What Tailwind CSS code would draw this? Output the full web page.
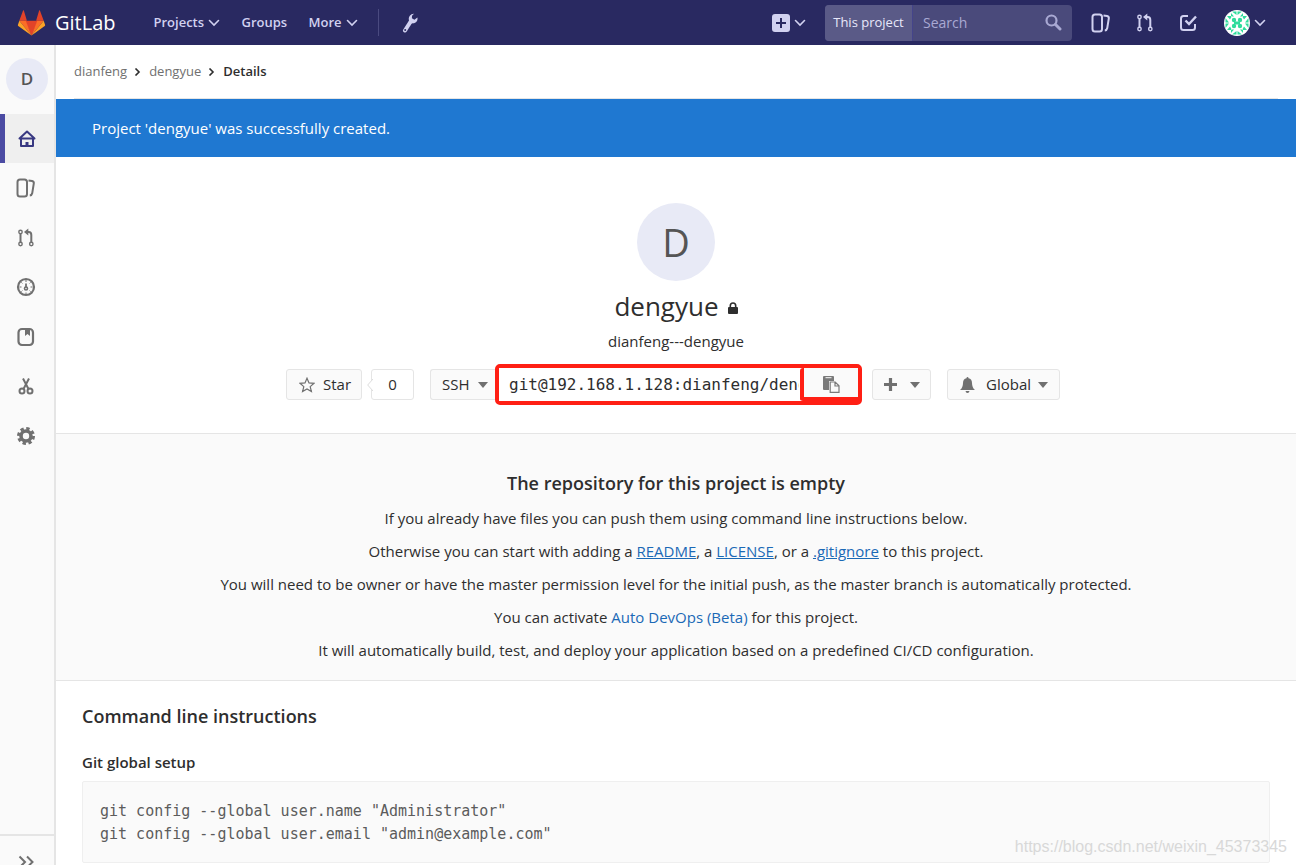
<!DOCTYPE html>
<html lang="en">
<head>
<meta charset="utf-8">
<meta name="viewport" content="width=device-width, initial-scale=1">
<title>dengyue · GitLab</title>
<script src="https://cdn.jsdelivr.net/npm/@tailwindcss/browser@4"></script>
</head>
<body class="relative flex min-h-screen flex-col bg-white font-['Open_Sans','Noto_Sans',sans-serif] text-[15px] text-[#2e2e2e]">

<svg class="hidden">
  <symbol id="chevron" viewBox="0 0 12 8"><path d="M1.500 1.500 6 6l4.500-4.500" fill="none" stroke="currentColor" stroke-width="1.600" stroke-linecap="round"/></symbol>
  <symbol id="caret" viewBox="0 0 10 6"><path d="M0 0h10L5 6z" fill="currentColor"/></symbol>
  <symbol id="issues" viewBox="0 0 20 20"><g fill="none" stroke="currentColor" stroke-width="2"><rect x="1.500" y="1.500" width="9.500" height="17" rx="2.500"/><path d="M12.500 2.500l3.600.4q2 .4 1.700 2.400l-1.600 10q-.4 2-2.400 2.200"/></g></symbol>
  <symbol id="merge" viewBox="0 0 20 20"><g fill="none" stroke="currentColor" stroke-width="1.400"><circle cx="4.500" cy="4" r="1.700"/><circle cx="4.500" cy="16" r="1.700"/><circle cx="15.300" cy="16" r="1.700"/><path d="M4.500 6v8M15.300 14V7q0-3-2.500-3H11" stroke-width="2"/></g><path d="M12.300.5v7L8 4z" fill="currentColor"/></symbol>
</svg>

<header class="flex h-[45px] items-center bg-[#292961] pr-[30px] pl-[17px] text-[#d1d1f0]">
  <a href="#" class="flex items-center gap-[9px]">
    <svg class="h-[26px] w-[29px]" viewBox="0 0 36 34">
      <path fill="#e24329" d="M2 14l5-13.200q.5-.8 1 0L12 14zM34 14 29 .8q-.5-.8-1 0L24 14z"/>
      <path fill="#e24329" d="M18 33.500 9.400 14h17.200z"/>
      <path fill="#fc6d26" d="M18 33.500 10.500 14H2z"/><path fill="#fc6d26" d="M18 33.500 25.500 14H34z"/>
      <path fill="#fca326" d="M2 14 .2 19.500a1.400 1.400 0 0 0 .5 1.400L18 33.500z"/><path fill="#fca326" d="M34 14l1.800 5.500a1.400 1.400 0 0 1-.5 1.400L18 33.500z"/>
    </svg>
    <span class="text-[20px] text-white">GitLab</span>
  </a>
  <nav class="ml-[38px] flex items-center text-[13px] font-semibold">
    <button class="flex w-[88px] items-center gap-1">Projects <svg class="h-2 w-3"><use href="#chevron"/></svg></button>
    <a href="#" class="w-[67px]">Groups</a>
    <button class="flex w-[69px] items-center gap-1">More <svg class="h-2 w-3"><use href="#chevron"/></svg></button>
    <span class="h-[27px] w-px bg-[#4a4a80]"></span>
    <a href="#" aria-label="Admin area" class="ml-[23px]"><svg class="h-5 w-4" viewBox="0 0 16 20"><path d="M3 17.500 9 8" stroke="currentColor" stroke-width="4" stroke-linecap="round"/><path d="M12 .8a5 5 0 0 0-5 6.500l1 3.200 4-.3a5 5 0 0 0 3.400-5.700l-3 2.300-2.500-1.500.1-2.600z" fill="currentColor"/><circle cx="3.200" cy="17" r="1" fill="#292961"/></svg></a>
  </nav>
  <div class="ml-auto flex items-center">
    <button aria-label="New" class="mr-[19px] flex items-center gap-1"><svg class="h-[18px] w-[18px]" viewBox="0 0 18 18"><rect width="18" height="18" rx="3" fill="currentColor"/><path d="M9 4v10M4 9h10" stroke="#292961" stroke-width="2"/></svg><svg class="h-2 w-3"><use href="#chevron"/></svg></button>
    <form class="mr-[19px] flex h-9 w-[247px] items-center overflow-hidden rounded bg-[#4a4a7b]">
      <span class="flex h-full w-[88px] shrink-0 items-center justify-center border-r border-[#44448a] bg-[#5a5a87] text-[13px] whitespace-nowrap text-[#e8e8fa]">This project</span>
      <input type="text" aria-label="Search" placeholder="Search" class="min-w-0 flex-1 bg-transparent pl-[10px] text-[14px] outline-none placeholder:text-[#a9a9d3]">
      <svg class="mr-[10px] h-[17px] w-[17px] text-[#a9a9d3]" viewBox="0 0 17 17"><circle cx="6.500" cy="6.500" r="5" fill="none" stroke="currentColor" stroke-width="2.200"/><path d="M10.500 10.500 15 15" stroke="currentColor" stroke-width="3" stroke-linecap="round"/></svg>
    </form>
    <div class="mr-[25px] flex gap-[24px]">
      <a href="#" aria-label="Issues"><svg class="h-5 w-5"><use href="#issues"/></svg></a>
      <a href="#" aria-label="Merge requests"><svg class="h-5 w-5"><use href="#merge"/></svg></a>
      <a href="#" aria-label="Todos"><svg class="h-5 w-5" viewBox="0 0 20 20"><g fill="none" stroke="currentColor"><path d="M9 3H4.500Q2 3 2 5.500v9Q2 17 4.500 17h9q2.500 0 2.500-2.500V11" stroke-width="2"/><path d="M6.500 7.500 10 11l7-7.500" stroke-width="2.400"/></g></svg></a>
    </div>
    <button aria-label="Account" class="flex items-center gap-1">
      <svg class="h-[26px] w-[26px]" viewBox="0 0 26 26"><circle cx="13" cy="13" r="13" fill="#fff"/><g fill="#2fdc9c"><circle cx="10" cy="10" r="2.200"/><circle cx="16" cy="10" r="2.200"/><circle cx="10" cy="16" r="2.200"/><circle cx="16" cy="16" r="2.200"/><path d="M10 11.500h6v3h-6zM8 1.500l4.500 3.500V1.500zM18 1.500l-4.500 3.500V1.500zM8 24.500l4.500-3.500v3.500zM18 24.500l-4.500-3.500v3.500zM1.500 8 5 12.500H1.500zM1.500 18 5 13.500H1.500zM24.500 8 21 12.500h3.500zM24.500 18 21 13.500h3.500zM3 6h5L6 9.500zM23 6h-5l2 3.500zM3 20h5l-2-3.500zM23 20h-5l2-3.500zM7 3v3.500h3zM19 3v3.500h-3zM7 23v-3.500h3zM19 23v-3.500h-3z"/></g></svg>
      <svg class="h-2 w-3"><use href="#chevron"/></svg>
    </button>
  </div>
</header>

<div class="flex flex-1">
  <aside class="flex w-[56px] shrink-0 flex-col border-r-2 border-[#e5e5e5] bg-[#fafafa] text-[#707070]">
    <a href="#" class="mt-[13px] mb-[14px] ml-[6px] flex h-[42px] w-[42px] items-center justify-center rounded-full bg-[#e8eaf6] text-[17px] font-semibold text-[#555]">D</a>
    <nav class="flex h-[346px] flex-col justify-between">
      <a href="#" aria-label="Overview" class="flex h-[49px] items-center border-l-[5px] border-[#4b4ba3] bg-[#efefef] pl-[13px] text-[#393982]"><svg class="h-[18px] w-[18px]" viewBox="0 0 18 18"><g fill="none" stroke="currentColor" stroke-width="2" stroke-linejoin="round" stroke-linecap="round"><path d="M1.500 8.500 9 1.500l7.500 7zM3 9v7h12V9"/></g><path d="M7.500 12h3v4h-3z" fill="currentColor"/></svg></a>
      <a href="#" aria-label="Issues" class="flex h-[49px] items-center pl-4"><svg class="h-5 w-5"><use href="#issues"/></svg></a>
      <a href="#" aria-label="Merge requests" class="flex h-[49px] items-center pl-4"><svg class="h-5 w-5"><use href="#merge"/></svg></a>
      <a href="#" aria-label="CI / CD" class="flex h-[49px] items-center pl-4"><svg class="h-5 w-5" viewBox="0 0 20 20"><g fill="none" stroke="currentColor"><circle cx="10" cy="10" r="8" stroke-width="2.200"/><path d="M10 3v2M10 15.500v1.500M3.500 10h2M14.500 10h2M5.400 5.400l1 1M14.600 5.400l-1 1M5.400 14.600l1-1M14.600 14.600l-1-1"/><circle cx="10" cy="11.500" r="1.500" stroke-width="1.600"/><path d="M10 10.500V6.500" stroke-width="1.800"/></g></svg></a>
      <a href="#" aria-label="Wiki" class="flex h-[49px] items-center pl-4"><svg class="h-5 w-5" viewBox="0 0 20 20"><rect x="2.500" y="2" width="14.500" height="16" rx="3.500" fill="none" stroke="currentColor" stroke-width="2.200"/><path d="M9 2h5v7l-2.500-2L9 9z" fill="currentColor"/></svg></a>
      <a href="#" aria-label="Snippets" class="flex h-[49px] items-center pl-4"><svg class="h-5 w-5" viewBox="0 0 20 20"><g fill="none" stroke="currentColor" stroke-width="2"><circle cx="6" cy="15" r="2.500"/><circle cx="14" cy="15" r="2.500"/><path d="M7.500 13 13 2.500M12.500 13 7 2.500"/></g></svg></a>
      <a href="#" aria-label="Settings" class="flex h-[49px] items-center pl-4"><svg class="h-5 w-5" viewBox="0 0 20 20"><circle cx="10" cy="10" r="5" fill="none" stroke="currentColor" stroke-width="3.600"/><circle cx="10" cy="10" r="7.600" fill="none" stroke="currentColor" stroke-width="2.800" stroke-dasharray="3.400 2.570"/></svg></a>
    </nav>
    <button aria-label="Expand sidebar" class="mt-auto h-[31px] overflow-hidden border-t-2 border-[#e5e5e5] pt-[19px] pl-[18px]"><svg class="h-[14px] w-4" viewBox="0 0 16 14"><path d="M1.500 1.500 7 7l-5.500 5.500M9 1.500 14.500 7 9 12.500" fill="none" stroke="currentColor" stroke-width="2"/></svg></button>
  </aside>

  <main class="min-w-0 flex-1">
    <nav aria-label="Breadcrumb" class="mx-[18px] flex h-[54px] items-center border-b border-[#e5e5e5] text-[13px] text-[#707070]">
      <a href="#">dianfeng</a>
      <svg class="mx-[7px] h-2 w-2 text-[#2e2e2e]" viewBox="0 0 8 8"><path d="M1.500.5 5 4 1.500 7.500" fill="none" stroke="currentColor" stroke-width="1.600"/></svg>
      <a href="#">dengyue</a>
      <svg class="mx-[7px] h-2 w-2 text-[#2e2e2e]" viewBox="0 0 8 8"><path d="M1.500.5 5 4 1.500 7.500" fill="none" stroke="currentColor" stroke-width="1.600"/></svg>
      <a href="#" class="font-semibold text-[#2e2e2e]">Details</a>
    </nav>
    <div role="status" class="flex h-[58px] items-center bg-[#1f78d1] px-9 text-white">Project 'dengyue' was successfully created.</div>

    <section class="flex flex-col items-center border-b border-[#e5e5e5] pt-[46px] pb-[28px]">
      <div class="flex h-[78px] w-[78px] items-center justify-center rounded-full bg-[#e8eaf6] text-[38px] text-[#555]">D</div>
      <h1 class="mt-[7px] flex h-9 items-center gap-[9px] text-[26px]">dengyue
        <svg class="mt-1 h-3 w-[10px]" viewBox="0 0 10 12"><rect y="5" width="10" height="7" rx="1" fill="currentColor"/><path d="M2.300 5.500V3.700a2.700 2.700 0 0 1 5.400 0v1.800" fill="none" stroke="currentColor" stroke-width="1.600"/></svg></h1>
      <p class="mt-[6px] h-[22px] leading-[22px]">dianfeng---dengyue</p>
      <div class="mt-[12px] flex h-[41px] items-center pr-[6px]">
        <button class="flex h-[31px] w-[76px] items-center gap-2 rounded-[3px] border border-[#e5e5e5] bg-[#fafafa] pl-[12px]"><svg class="h-4 w-4 text-[#707070]" viewBox="0 0 16 16"><path d="M8 1.200l2 4.700 5 .4-3.800 3.300 1.200 5L8 11.900l-4.400 2.700 1.200-5L1 6.300l5-.4z" fill="none" stroke="currentColor" stroke-width="1.200"/></svg>Star</button>
        <div class="relative ml-[9px] flex h-[31px] w-[43px] items-center justify-center rounded-[3px] border border-[#e5e5e5]"><svg class="absolute top-[9px] -left-[5px] h-3 w-[6px]" viewBox="0 0 6 12"><path d="M6 0v12L0 6z" fill="#fff"/><path d="M6 0 .7 6 6 12" fill="none" stroke="#dcdcdc"/></svg>0</div>
        <button class="ml-4 flex h-[31px] w-[65px] items-center gap-2 rounded-l-[3px] border border-r-0 border-[#e5e5e5] bg-[#fafafa] pl-[11px]">SSH <svg class="h-[6px] w-[10px] shrink-0 text-[#707070]"><use href="#caret"/></svg></button>
        <div class="flex h-[41px] w-[367px] rounded-[5px] border-4 border-[#ff1f14]">
          <input type="text" readonly aria-label="Project clone URL" value="git@192.168.1.128:dianfeng/dengyue.git" class="h-full w-[301px] bg-white pr-px pl-[10px] font-['DejaVu_Sans_Mono',monospace] text-[16px] outline-none">
          <button aria-label="Copy URL to clipboard" class="-mr-1 flex flex-1 items-center justify-center rounded-[3px] border-4 border-t-0 border-[#ff1f14] bg-[#fafafa] pt-1 text-[#7a7a7a]"><svg class="h-[17px] w-[17px]" viewBox="0 0 17 17"><path d="M1 0h9q1 0 1 1v4H6v9H1q-1 0-1-1V1q0-1 1-1z" fill="currentColor"/><path d="M2.500 1.700h6" stroke="#fafafa"/><path d="M7.200 6h5l3.800 3.800v6.600H7.200zM12 6v4h4" fill="#fafafa" stroke="currentColor" stroke-width="1.200"/></svg></button>
        </div>
        <button aria-label="Add" class="ml-[10px] flex h-[31px] w-[59px] items-center gap-[13px] rounded-[3px] border border-[#e5e5e5] bg-[#fafafa] pl-[11px] text-[#707070]"><svg class="h-[13px] w-[13px]" viewBox="0 0 13 13"><path d="M6.500 0v13M0 6.500h13" stroke="currentColor" stroke-width="3.200"/></svg><svg class="h-[6px] w-[10px]"><use href="#caret"/></svg></button>
        <button class="ml-4 flex h-[31px] w-[113px] items-center rounded-[3px] border border-[#e5e5e5] bg-[#fafafa] pl-[12px]"><svg class="mr-[11px] h-4 w-[15px] text-[#707070]" viewBox="0 0 15 16"><path d="M7.500 0q1 0 1 1.200Q12 2 12 6q0 4.500 3 7H0q3-2.500 3-7 0-4 3.500-4.800Q6.500 0 7.500 0zM5.500 14h4q-.3 2-2 2t-2-2z" fill="currentColor"/></svg>Global<svg class="ml-[7px] h-[6px] w-[10px] text-[#707070]"><use href="#caret"/></svg></button>
      </div>
    </section>

    <section class="border-b border-[#e5e5e5] bg-[#fafafa] pt-[36px] pb-[13px] text-center">
      <h2 class="text-[18px] leading-[26px] font-semibold">The repository for this project is empty</h2>
      <div class="mt-[6px] text-[15px] leading-[33px]">
        <p>If you already have files you can push them using command line instructions below.</p>
        <p>Otherwise you can start with adding a <a href="#" class="text-[#1b69b6] underline">README</a>, a <a href="#" class="text-[#1b69b6] underline">LICENSE</a>, or a <a href="#" class="text-[#1b69b6] underline">.gitignore</a> to this project.</p>
        <p>You will need to be owner or have the master permission level for the initial push, as the master branch is automatically protected.</p>
        <p>You can activate <a href="#" class="text-[#1b69b6]">Auto DevOps (Beta)</a> for this project.</p>
        <p>It will automatically build, test, and deploy your application based on a predefined CI/CD configuration.</p>
      </div>
    </section>

    <section class="px-[26px] pt-[22px]">
      <h2 class="text-[18px] leading-[26px] font-semibold">Command line instructions</h2>
      <h3 class="mt-[22px] text-[15px] leading-[22px] font-semibold">Git global setup</h3>
      <pre class="mt-2 rounded-[2px] border border-[#efefef] bg-[#fafafa] px-[17px] pt-[18px] pb-4 font-['DejaVu_Sans_Mono',monospace] text-[15px] leading-[23px] text-[#5c5c5c]">git config --global user.name "Administrator"
git config --global user.email "admin@example.com"</pre>
    </section>
  </main>
</div>
<span class="pointer-events-none absolute right-[9px] bottom-[6px] font-['Liberation_Sans',sans-serif] text-[16px] text-[#d8d8d8]">https://blog.csdn.net/weixin_45373345</span>
</body>
</html>
